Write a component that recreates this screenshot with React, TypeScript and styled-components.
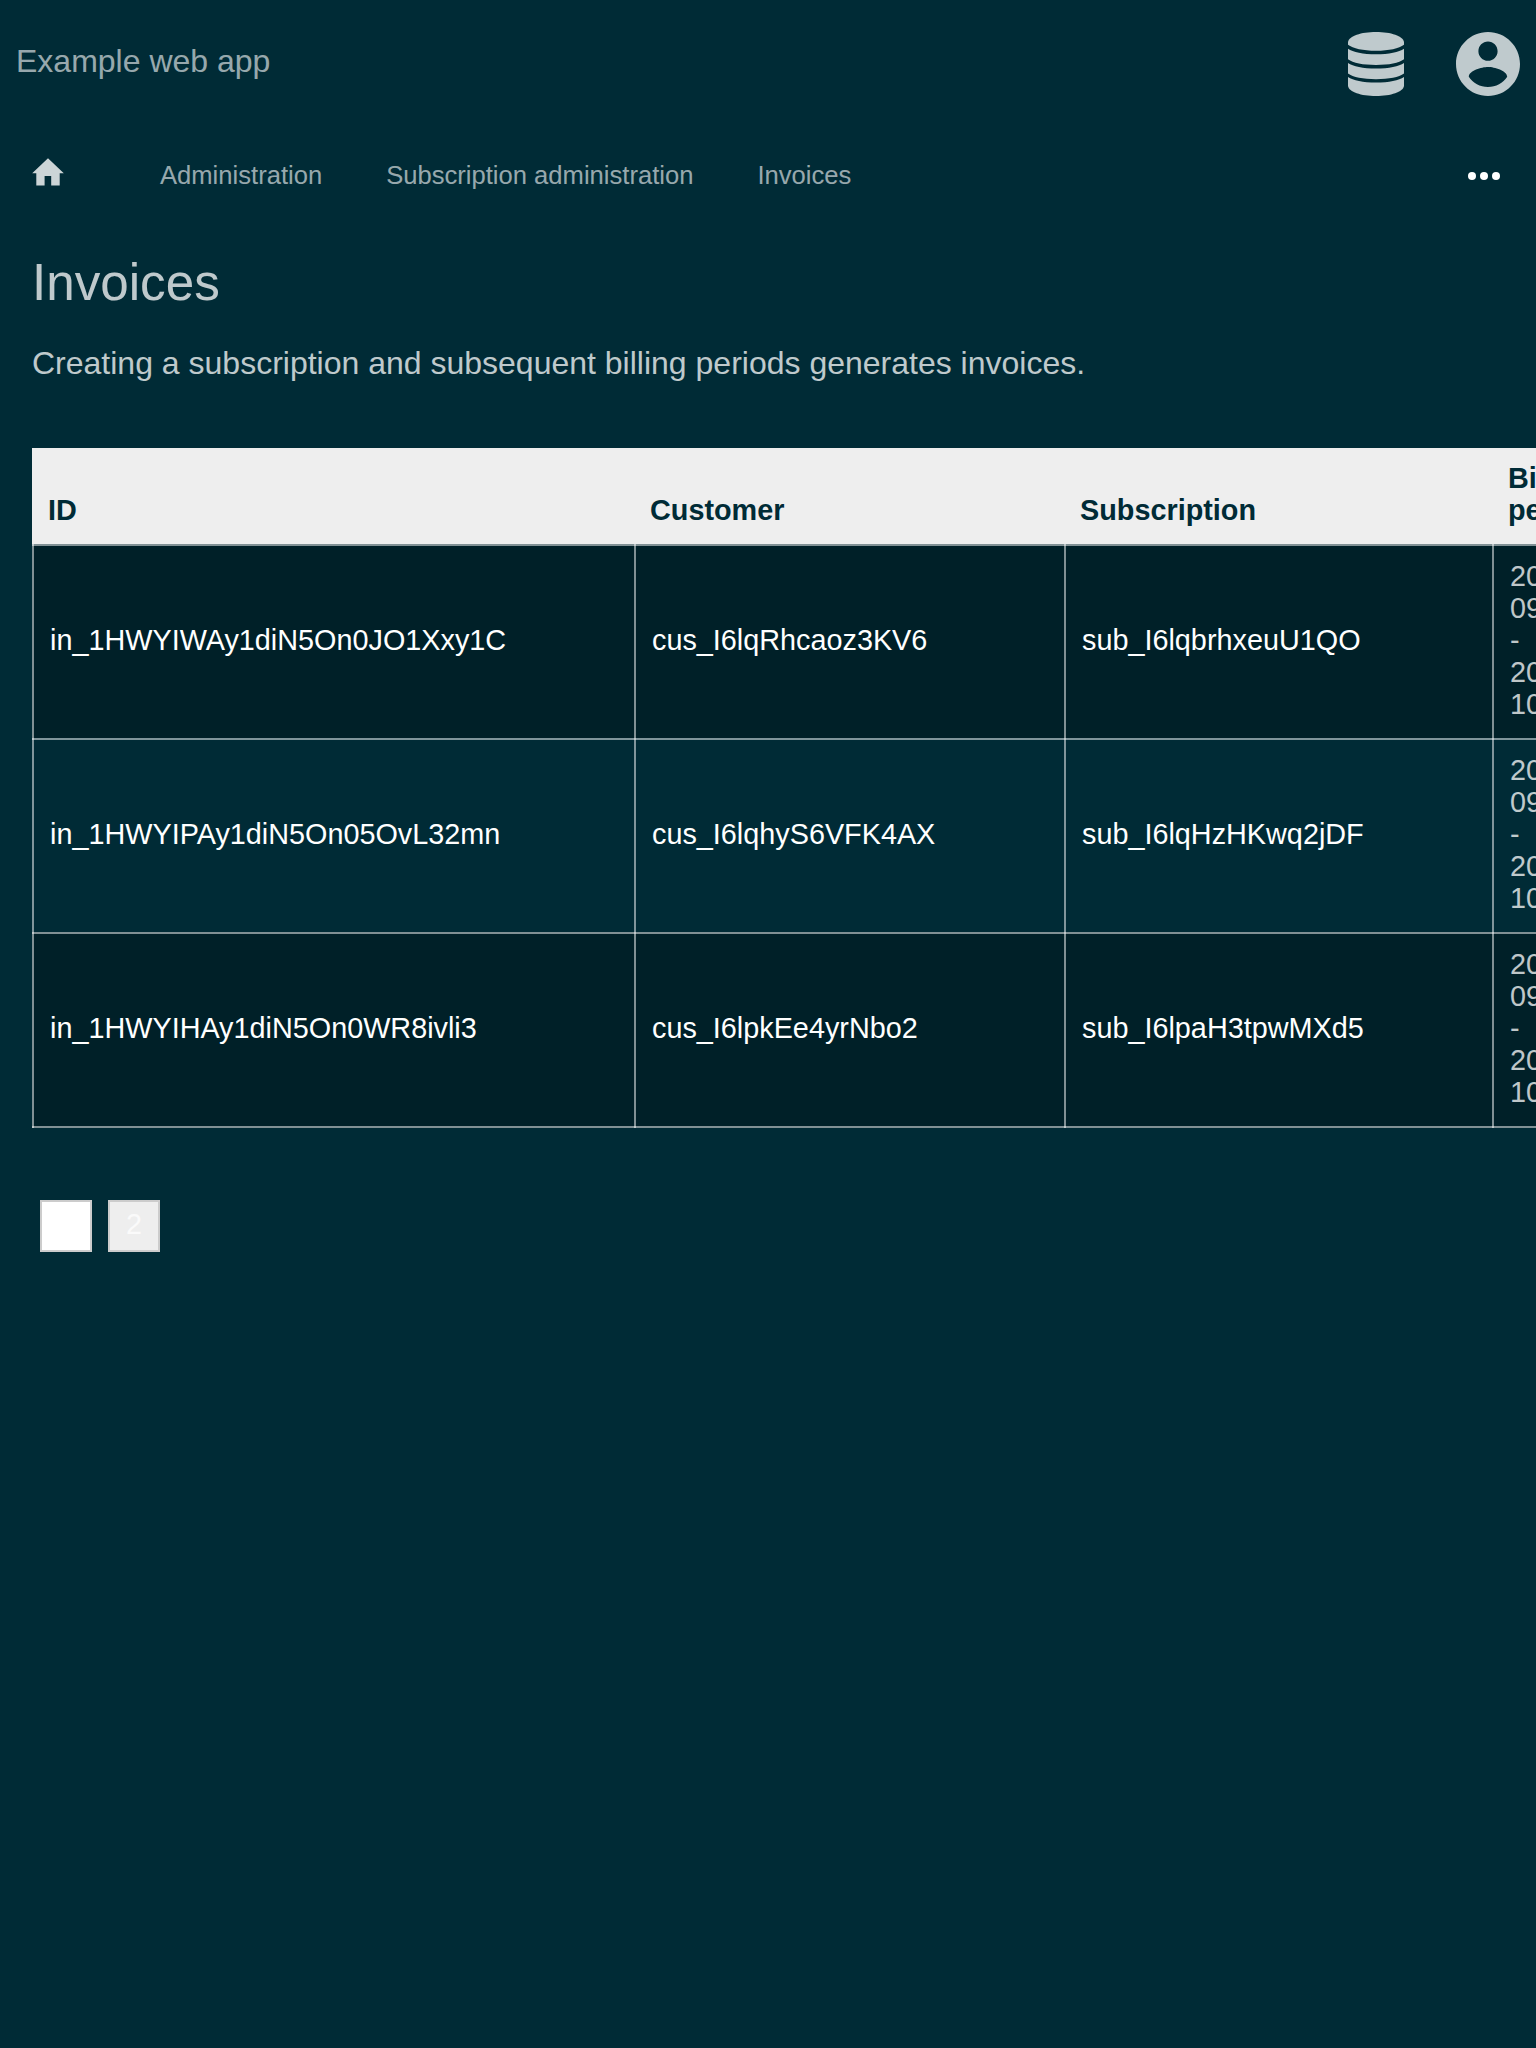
import React from "react";
import styled, { createGlobalStyle } from "styled-components";

const GlobalStyle = createGlobalStyle`
  body {
    margin: 0;
    background: #002b36;
    font-family: "Liberation Sans", Arial, sans-serif;
    font-size: 32px;
    color: rgba(255, 255, 255, 0.75);
  }
`;

const Screen = styled.div`
  height: 2048px;
  overflow: hidden;
`;

const Header = styled.header`
  display: flex;
  align-items: center;
  justify-content: space-between;
  height: 128px;
  padding: 0 16px;
  box-sizing: border-box;
`;

const AppName = styled.div`
  line-height: 36px;
  margin-top: -6px;
  color: rgba(255, 255, 255, 0.6);
`;

const HeaderMenu = styled.div`
  display: flex;
  gap: 48px;

  svg {
    display: block;
    width: 64px;
    height: 64px;
    fill: #bfcacd;
  }
`;

const Navigation = styled.nav`
  display: flex;
  align-items: center;
  height: 96px;
  padding: 0 36px 0 32px;
  box-sizing: border-box;
  font-size: 25.6px;
  color: rgba(255, 255, 255, 0.6);
`;

const HomeIcon = styled.svg`
  width: 32px;
  height: 32px;
  margin: -8px 96px 0 0;
  fill: #ccd5d7;
`;

const Crumb = styled.span`
  margin: -2px 64px 0 0;
  line-height: 30px;
`;

const MoreIcon = styled.svg`
  width: 32px;
  height: 8px;
  margin-left: auto;
  fill: #fff;
`;

const Content = styled.main`
  padding: 30px 0 0 32px;
`;

const Title = styled.h1`
  margin: 0;
  font-size: 51.2px;
  font-weight: 400;
  line-height: 58px;
`;

const Intro = styled.p`
  margin: 33px 0 67px;
  line-height: 36px;
`;

const Table = styled.table`
  width: 1664px;
  table-layout: fixed;
  border-collapse: separate;
  border-spacing: 0;
  font-size: 28.8px;
  line-height: 32px;
`;

const Column = styled.col<{ $width: number }>`
  width: ${({ $width }) => $width}px;
`;

const HeadCell = styled.th`
  height: 64px;
  padding: 14px 16px 18px;
  background: #eee;
  color: #002b36;
  text-align: left;
  vertical-align: bottom;
`;

/* Translucent grid lines are inset shadows so that they add up where they cross. */
const Cell = styled.td<{ $link?: boolean }>`
  padding: 16px 16px 18px 18px;
  box-shadow: inset 2px 0 0 rgba(255, 255, 255, 0.5),
    inset 0 2px 0 rgba(255, 255, 255, 0.5);
  color: ${({ $link }) => ($link ? "#fff" : "inherit")};
`;

const Row = styled.tr`
  &:nth-child(odd) {
    background: rgba(0, 0, 0, 0.25);
  }

  &:last-child ${Cell} {
    padding-bottom: 20px;
    box-shadow: inset 2px 0 0 rgba(255, 255, 255, 0.5),
      inset 0 2px 0 rgba(255, 255, 255, 0.5),
      inset 0 -2px 0 rgba(255, 255, 255, 0.5);
  }
`;

const Pagination = styled.div`
  display: flex;
  gap: 16px;
  padding: 72px 0 0 8px;
`;

const Page = styled.span<{ $current?: boolean }>`
  width: 52px;
  height: 52px;
  box-sizing: border-box;
  border: 2px solid #ccc;
  background: ${({ $current }) => ($current ? "#fff" : "#eee")};
  color: ${({ $current }) => ($current ? "#fff" : "#fafafa")};
  font-size: 28.8px;
  line-height: 44px;
  text-align: center;
`;

const invoices = [
  ["in_1HWYIWAy1diN5On0JO1Xxy1C", "cus_I6lqRhcaoz3KV6", "sub_I6lqbrhxeuU1QO"],
  ["in_1HWYIPAy1diN5On05OvL32mn", "cus_I6lqhyS6VFK4AX", "sub_I6lqHzHKwq2jDF"],
  ["in_1HWYIHAy1diN5On0WR8ivli3", "cus_I6lpkEe4yrNbo2", "sub_I6lpaH3tpwMXd5"],
];

const period = ["2020-", "09-29", "-", "2020-", "10-29"];

export default function App() {
  return (
    <Screen>
      <GlobalStyle />
      <Header>
        <AppName>Example web app</AppName>
        <HeaderMenu>
          <svg viewBox="0 0 64 64">
            <path d="M4 10C5 4 17 0 32 0s27 4 28 10v2.700C55 16.500 45 18.700 32 18.700S9 16.500 4 12.700Z" />
            <path d="M4 16.700c5 3.500 15 5.500 28 5.500s23-2 28-5.500v10.600c-5 3.700-15 5.700-28 5.700s-23-2-28-5.700Z" />
            <path d="M4 30.900c5 3.500 15 5.500 28 5.500s23-2 28-5.500v10.600c-5 3.700-15 5.700-28 5.700s-23-2-28-5.700Z" />
            <path d="M4 45.100c5 3.500 15 5.500 28 5.500s23-2 28-5.500V54C59 60 47 64 32 64S5 60 4 54Z" />
          </svg>
          <svg viewBox="2 2 20 20">
            <path d="M12 2C6.480 2 2 6.480 2 12s4.480 10 10 10 10-4.480 10-10S17.520 2 12 2zm0 3c1.660 0 3 1.340 3 3s-1.340 3-3 3-3-1.340-3-3 1.340-3 3-3zm0 14.200c-2.500 0-4.710-1.280-6-3.220.030-1.990 4-3.080 6-3.080 1.990 0 5.970 1.090 6 3.080-1.290 1.940-3.500 3.220-6 3.220z" />
          </svg>
        </HeaderMenu>
      </Header>
      <Navigation>
        <HomeIcon viewBox="0 0 32 32">
          <path d="M16 2.300 0.200 17.300H4.300v12.100h8.300V20h6.600v9.400h8.500V17.300H31.800Z" />
        </HomeIcon>
        <Crumb>Administration</Crumb>
        <Crumb>Subscription administration</Crumb>
        <Crumb>Invoices</Crumb>
        <MoreIcon viewBox="0 0 32 8">
          <circle cx="4" cy="4" r="4" />
          <circle cx="16" cy="4" r="4" />
          <circle cx="28" cy="4" r="4" />
        </MoreIcon>
      </Navigation>
      <Content>
        <Title>Invoices</Title>
        <Intro>Creating a subscription and subsequent billing periods generates invoices.</Intro>
        <Table>
          <colgroup>
            <Column $width={602} />
            <Column $width={430} />
            <Column $width={428} />
            <Column $width={204} />
          </colgroup>
          <thead>
            <tr>
              <HeadCell>ID</HeadCell>
              <HeadCell>Customer</HeadCell>
              <HeadCell>Subscription</HeadCell>
              <HeadCell>
                Billing
                <br />
                period
              </HeadCell>
            </tr>
          </thead>
          <tbody>
            {invoices.map((ids) => (
              <Row key={ids[0]}>
                {ids.map((id) => (
                  <Cell key={id} $link>
                    {id}
                  </Cell>
                ))}
                <Cell>
                  {period.map((line, index) => (
                    <div key={index}>{line}</div>
                  ))}
                </Cell>
              </Row>
            ))}
          </tbody>
        </Table>
        <Pagination>
          <Page $current>1</Page>
          <Page>2</Page>
        </Pagination>
      </Content>
    </Screen>
  );
}
